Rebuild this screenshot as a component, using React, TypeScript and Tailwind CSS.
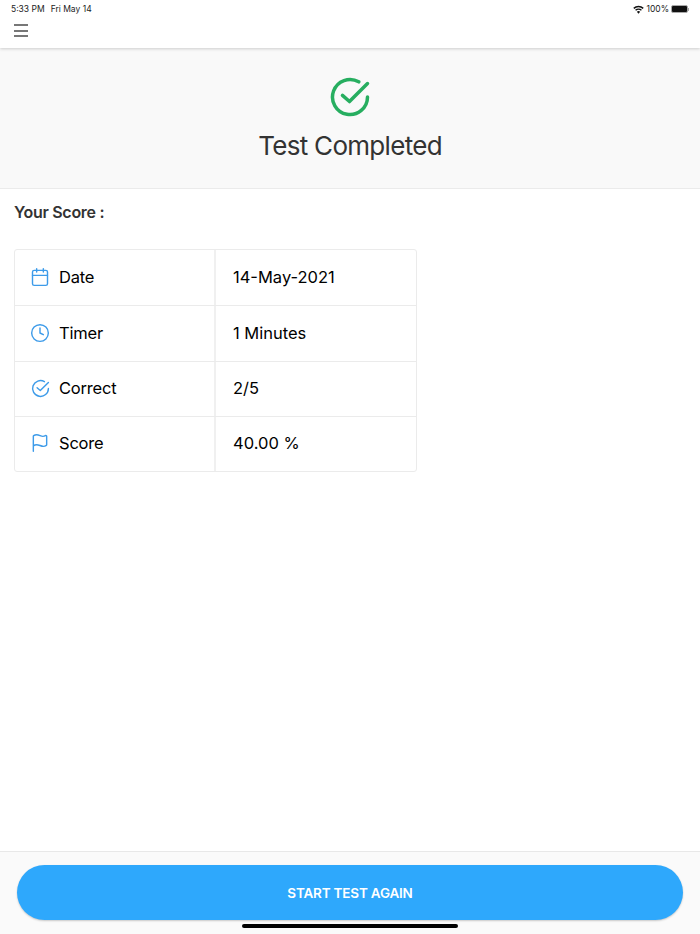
import { Calendar, Clock, Flag } from "lucide-react";

function CheckCircle({ size, strokeWidth }: { size: number; strokeWidth: number }) {
  return (
    <svg width={size} height={size} viewBox="0 0 24 24" fill="none" stroke="currentColor" strokeWidth={strokeWidth} strokeLinecap="round" strokeLinejoin="round">
      <path d="M22 12a10 10 0 1 1-5-8.66" />
      <path d="M7.7 11.1l4 3.5L22 4.3" />
    </svg>
  );
}

const rows = [
  { label: "Date", value: "14-May-2021", icon: <Calendar size={20} strokeWidth={1.7} /> },
  { label: "Timer", value: "1 Minutes", icon: <Clock size={20} strokeWidth={1.7} /> },
  { label: "Correct", value: "2/5", icon: <CheckCircle size={19} strokeWidth={1.8} /> },
  { label: "Score", value: "40.00 %", icon: <Flag size={20} strokeWidth={1.7} /> },
];

const StatusBar = () => (
  <div className="h-[18px] px-[11px] flex items-center justify-between text-[8.5px] text-[#222]">
    <div className="flex gap-[6px]">
      <span>5:33 PM</span>
      <span>Fri May 14</span>
    </div>
    <div className="flex items-center gap-[2px]">
      <svg width="11" height="9" viewBox="0 0 12 9" fill="#111">
        <path d="M6 9 4.2 6.9a2.6 2.6 0 0 1 3.6 0L6 9Z" />
        <path d="M3.3 5.9 2.3 4.8a5.4 5.4 0 0 1 7.4 0L8.7 5.9a4 4 0 0 0-5.4 0Z" />
        <path d="M1.4 3.9.3 2.7a8.3 8.3 0 0 1 11.4 0l-1.1 1.2a6.8 6.8 0 0 0-9.2 0Z" />
      </svg>
      <span>100%</span>
      <div className="flex items-center">
        <div className="w-[17px] h-[8px] rounded-[2px] border border-[#aaa] bg-[#111]" />
        <div className="w-[1px] h-[3px] bg-[#aaa]" />
      </div>
    </div>
  </div>
);

export default function App() {
  return (
    <div className="relative h-[934px] w-[700px] flex flex-col bg-white font-['Inter',sans-serif] overflow-hidden">
      <div className="h-[48px] shrink-0 bg-white shadow-[0_1px_3px_rgba(0,0,0,0.18)] z-10">
        <StatusBar />
        <button className="ml-[14px] mt-[6px] flex flex-col gap-[3.5px]">
          <span className="block w-[14px] h-[2px] bg-[#777]" />
          <span className="block w-[14px] h-[2px] bg-[#777]" />
          <span className="block w-[14px] h-[2px] bg-[#777]" />
        </button>
      </div>

      <div className="h-[141px] shrink-0 bg-[#f9f9f9] border-b border-[#ebebeb] flex flex-col items-center pt-[28px]">
        <div className="text-[#27ae60]">
          <CheckCircle size={42} strokeWidth={2} />
        </div>
        <div className="mt-[10px] text-[26px] leading-[36px] tracking-[-0.7px] text-[#333]">Test Completed</div>
      </div>

      <div className="flex-1 px-[14px]">
        <div className="mt-[13px] text-[16px] leading-[20px] font-semibold tracking-[-0.3px] text-[#333]">Your Score :</div>
        <div className="mt-[27px] w-[403px] rounded-[3px] border border-[#ebebeb]">
          {rows.map((row, i) => (
            <div key={row.label} className={`grid grid-cols-[201px_1fr] h-[55.25px] ${i > 0 ? "border-t border-[#ebebeb]" : ""}`}>
              <div className="flex items-center border-r-2 border-[#f0f0f0] pl-[15px] pb-[1px]">
                <span className="w-[20px] flex justify-center text-[#3d9be9]">{row.icon}</span>
                <span className="ml-[9px] text-[16.5px] tracking-[-0.2px] text-black">{row.label}</span>
              </div>
              <div className="flex items-center pl-[17px] pb-[1px] text-[16.5px] text-black">{row.value}</div>
            </div>
          ))}
        </div>
      </div>

      <div className="h-[83px] shrink-0 bg-[#fafafa] border-t border-[#e8e8e8] px-[17px] pt-[13px]">
        <button className="w-full h-[55px] pt-[1px] rounded-full bg-[#2ea8fc] shadow-[0_1px_2px_rgba(0,0,0,0.2)] text-white text-[13.5px] tracking-[-0.2px] font-semibold">
          START TEST AGAIN
        </button>
      </div>

      <div className="absolute left-[242px] bottom-[6px] w-[216px] h-[4px] rounded-full bg-black" />
    </div>
  );
}
